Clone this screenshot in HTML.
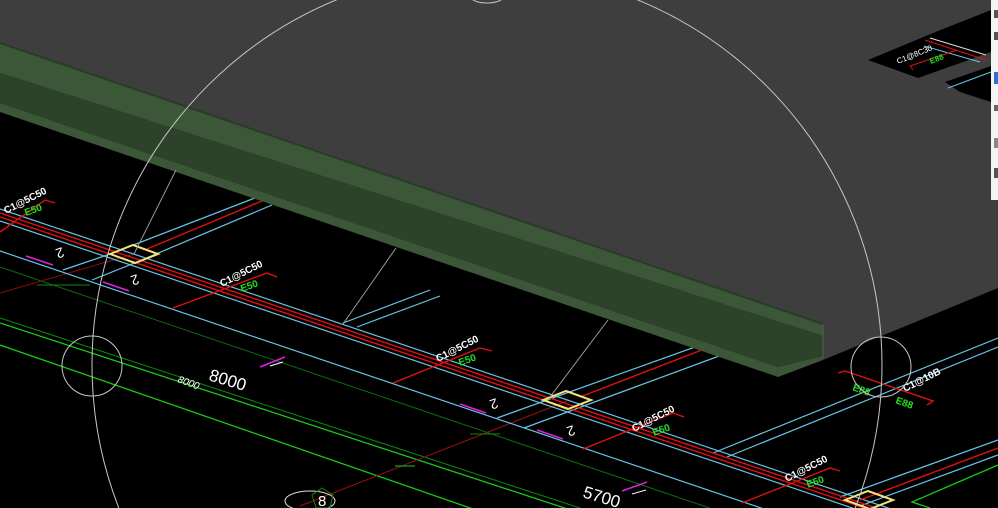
<!DOCTYPE html>
<html><head><meta charset="utf-8"><style>
html,body{margin:0;padding:0;background:#000;width:998px;height:508px;overflow:hidden}
svg{display:block;overflow:hidden}
text{font-family:"Liberation Sans",sans-serif}
</style></head><body>
<svg width="998" height="508" viewBox="0 0 998 508" xmlns="http://www.w3.org/2000/svg">
<rect width="998" height="508" fill="#000"/>
<g fill="none" stroke-width="1">
<line x1="0" y1="267" x2="998" y2="606" stroke="#0b6e0b"/>
<line x1="0" y1="318" x2="998" y2="645" stroke="#0e8a0e"/>
<line x1="0" y1="323" x2="998" y2="650" stroke="#18c818" stroke-width="1.3"/>
<line x1="0" y1="345" x2="998" y2="691" stroke="#18c818" stroke-width="1.3"/>
<line x1="0" y1="293" x2="134" y2="254" stroke="#8a0e0e"/>
<line x1="300" y1="506" x2="567" y2="401" stroke="#a01010"/>
<line x1="37" y1="285" x2="90" y2="285" stroke="#0e8a0e"/>
<line x1="470" y1="434" x2="500" y2="434" stroke="#0e8a0e"/>
<line x1="395" y1="466" x2="415" y2="466" stroke="#18c818"/>
</g>
<g fill="none" stroke="#6ac3e6" stroke-width="1.2">
<line x1="0" y1="209" x2="998" y2="545"/>
<line x1="0" y1="221" x2="998" y2="557"/>
<line x1="0" y1="251" x2="998" y2="588"/>
<line x1="110" y1="254" x2="260" y2="196"/>
<line x1="137" y1="262" x2="272" y2="205"/>
<line x1="63" y1="270" x2="110" y2="254"/>
<line x1="92" y1="280" x2="137" y2="262"/>
<line x1="343" y1="323" x2="430" y2="290"/>
<line x1="357" y1="327" x2="440" y2="296"/>
<line x1="497" y1="418" x2="720" y2="338"/>
<line x1="524" y1="428" x2="730" y2="352"/>
<line x1="713" y1="453" x2="998" y2="338"/>
<line x1="727" y1="457" x2="998" y2="347"/>
<line x1="840" y1="497" x2="998" y2="440"/>
<line x1="860" y1="506" x2="998" y2="455"/>
</g>
<g fill="none" stroke="#e01010" stroke-width="1.4">
<line x1="0" y1="213" x2="998" y2="549"/>
<line x1="0" y1="217" x2="998" y2="553"/>
<line x1="147" y1="249" x2="262" y2="201"/>
<line x1="580" y1="397" x2="720" y2="343"/>
<line x1="860" y1="500" x2="998" y2="448"/>
<polyline points="0,232 45,200 55,203"/>
<polyline points="173,308 267,273 277,277"/>
<polyline points="393,383 480,348 492,351"/>
<polyline points="583,449 673,413 684,417"/>
<polyline points="742,503 830,468 840,471"/>
<polyline points="838,373 845,371 933,401 927,405"/>
</g>
<polyline points="930,508 912,502 998,465" fill="none" stroke="#18c818" stroke-width="1.3"/>
<g stroke="#e020e0" stroke-width="1.6">
<line x1="26" y1="256" x2="53" y2="265"/>
<line x1="103" y1="282" x2="129" y2="291"/>
<line x1="260" y1="367" x2="285" y2="357"/>
<line x1="460" y1="404" x2="486" y2="413"/>
<line x1="537" y1="430" x2="563" y2="439"/>
<line x1="622" y1="491" x2="647" y2="482"/>
</g>
<g fill="none" stroke="#f3e37a" stroke-width="2">
<polygon points="110,254 133,245 158,254 135,263"/>
<polygon points="543,400 566,391 591,400 568,409"/>
<polygon points="845,500 868,491 893,500 870,509"/>
</g>
<g font-size="10" fill="#fff" font-weight="bold">
<text transform="translate(6,214) rotate(-27)">C1@5C50</text>
<text transform="translate(222,287) rotate(-27)">C1@5C50</text>
<text transform="translate(438,362) rotate(-27)">C1@5C50</text>
<text transform="translate(634,432) rotate(-27)">C1@5C50</text>
<text transform="translate(787,482) rotate(-27)">C1@5C50</text>
<text transform="translate(905,392) rotate(-27)">C1@10B</text>
</g>
<g font-size="10" fill="#22e022" font-weight="bold">
<text transform="translate(26,216) rotate(-20)">E50</text>
<text transform="translate(242,292) rotate(-20)">E50</text>
<text transform="translate(460,366) rotate(-20)">E50</text>
<text transform="translate(654,436) rotate(-20)">E50</text>
<text transform="translate(808,488) rotate(-20)">E50</text>
<text transform="translate(852,390) rotate(20)">E88</text>
<text transform="translate(895,403) rotate(20)">E88</text>
</g>
<g font-size="14" fill="#fff">
<text transform="translate(62,247) rotate(160)">2</text>
<text transform="translate(137,274) rotate(160)">2</text>
<text transform="translate(496,398) rotate(160)">2</text>
<text transform="translate(573,425) rotate(160)">2</text>
</g>
<text transform="translate(208,380) rotate(17)" font-size="17" fill="#fff">8000</text>
<text transform="translate(177,382) rotate(20)" font-size="10" fill="#fff" font-style="italic">8000</text>
<text transform="translate(582,497) rotate(17)" font-size="17" fill="#fff">5700</text>
<line x1="270" y1="366" x2="283" y2="362" stroke="#fff"/>
<line x1="632" y1="494" x2="646" y2="490" stroke="#fff"/>
<ellipse cx="310" cy="501" rx="25" ry="10" fill="none" stroke="#ddd"/>
<polygon points="322,488 333,495 330,508 316,508 312,495" fill="none" stroke="#0b8a0b"/>
<text x="318" y="506" font-size="15" fill="#fff">8</text>
<polygon points="0,0 998,0 998,288 823,360 823,324 0,43" fill="#3e3e3e"/>
<polygon points="868,60 933,33 991,10 991,52 918,78" fill="#000"/>
<polygon points="945,82 991,66 991,102 960,92" fill="#000"/>
<line x1="930" y1="38" x2="986" y2="55" stroke="#ddd"/>
<line x1="925" y1="40" x2="986" y2="60" stroke="#e01010"/>
<line x1="924" y1="46" x2="980" y2="62" stroke="#6ac3e6"/>
<polyline points="957,50 910,66 913,70" fill="none" stroke="#e01010"/>
<line x1="948" y1="88" x2="991" y2="72" stroke="#6ac3e6"/>
<text transform="translate(898,64) rotate(-22)" font-size="8" fill="#fff">C1@8C30</text>
<text transform="translate(931,64) rotate(-22)" font-size="8" fill="#22e022" font-weight="bold">E88</text>
<polygon points="0,43 823,324 823,336 0,73" fill="#3b5738"/>
<polygon points="0,73 823,336 823,356 778,367 0,103" fill="#2c4229"/>
<polygon points="0,103 778,367 823,356 823,360 778,377 0,112" fill="#3b5738"/>
<line x1="0" y1="43" x2="823" y2="324" stroke="#2a3b28" stroke-width="2"/>
<line x1="823" y1="324" x2="823" y2="358" stroke="#4a6a46"/>
<g fill="none" stroke="#c8c8c8" stroke-width="1">
<circle cx="487" cy="365" r="395"/>
<circle cx="92" cy="366" r="30"/>
<circle cx="881" cy="367" r="30"/>
<ellipse cx="487" cy="-3" rx="16" ry="6"/>
</g>
<g stroke="#9a9a9a" stroke-width="1">
<line x1="134" y1="254" x2="176" y2="170"/>
<line x1="343" y1="324" x2="396" y2="248"/>
<line x1="550" y1="397" x2="608" y2="320"/>
</g>
<rect x="991" y="0" width="7" height="200" fill="#f4f4f4"/>
<rect x="994" y="10" width="4" height="8" fill="#555"/>
<rect x="994" y="32" width="4" height="8" fill="#555"/>
<rect x="994" y="72" width="4" height="12" fill="#2f6fd0"/>
<rect x="994" y="105" width="4" height="6" fill="#666"/>
<rect x="994" y="138" width="4" height="10" fill="#888"/>
<rect x="994" y="168" width="4" height="10" fill="#555"/>
</svg>
</body></html>
